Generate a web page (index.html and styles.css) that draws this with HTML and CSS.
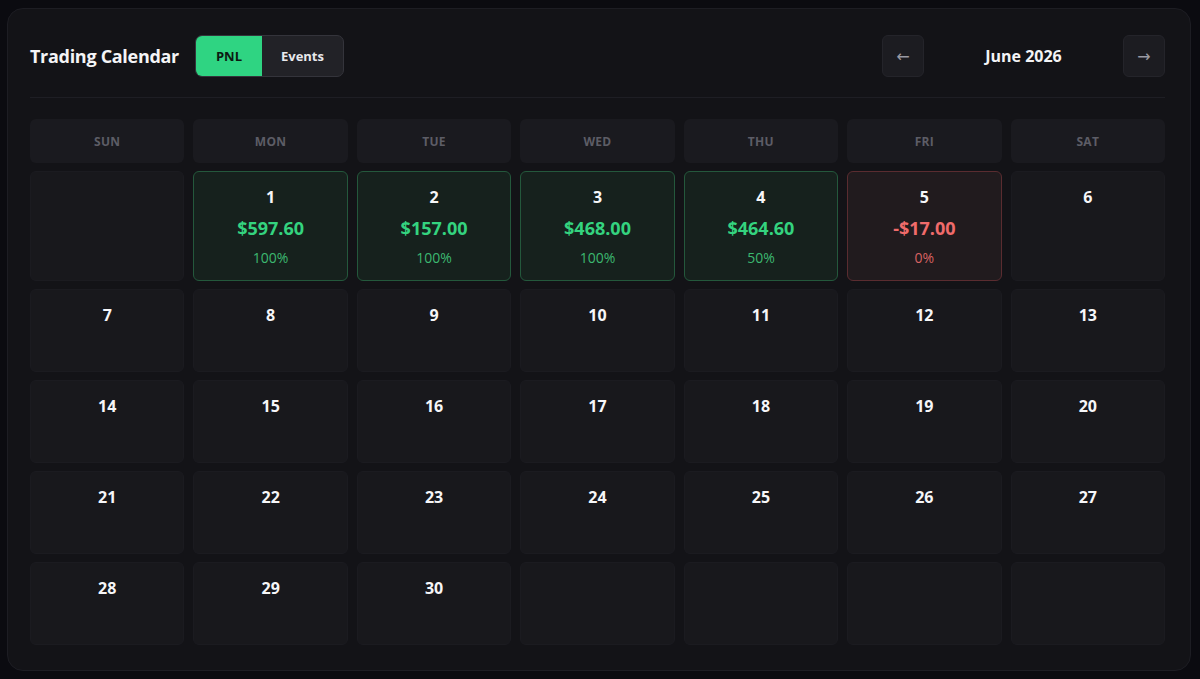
FILE: index.html
```html
<!DOCTYPE html>
<html>
<head>
<meta charset="utf-8">
<link rel="stylesheet" href="styles.css">
</head>
<body>
<div class="card">
  <div class="top">
    <div class="left">
      <h1 class="title">Trading Calendar</h1>
      <div class="toggle">
        <button class="seg active">PNL</button>
        <button class="seg">Events</button>
      </div>
    </div>
    <div class="nav">
      <button class="navbtn">←</button>
      <div class="month">June 2026</div>
      <button class="navbtn">→</button>
    </div>
  </div>
  <div class="grid">
    <div class="wd">SUN</div><div class="wd">MON</div><div class="wd">TUE</div><div class="wd">WED</div><div class="wd">THU</div><div class="wd">FRI</div><div class="wd">SAT</div>

    <div class="day empty"></div>
    <div class="day win"><div class="num">1</div><div class="amt">$597.60</div><div class="pct">100%</div></div>
    <div class="day win"><div class="num">2</div><div class="amt">$157.00</div><div class="pct">100%</div></div>
    <div class="day win"><div class="num">3</div><div class="amt">$468.00</div><div class="pct">100%</div></div>
    <div class="day win"><div class="num">4</div><div class="amt">$464.60</div><div class="pct">50%</div></div>
    <div class="day loss"><div class="num">5</div><div class="amt">-$17.00</div><div class="pct">0%</div></div>
    <div class="day"><div class="num">6</div></div>

    <div class="day"><div class="num">7</div></div>
    <div class="day"><div class="num">8</div></div>
    <div class="day"><div class="num">9</div></div>
    <div class="day"><div class="num">10</div></div>
    <div class="day"><div class="num">11</div></div>
    <div class="day"><div class="num">12</div></div>
    <div class="day"><div class="num">13</div></div>

    <div class="day"><div class="num">14</div></div>
    <div class="day"><div class="num">15</div></div>
    <div class="day"><div class="num">16</div></div>
    <div class="day"><div class="num">17</div></div>
    <div class="day"><div class="num">18</div></div>
    <div class="day"><div class="num">19</div></div>
    <div class="day"><div class="num">20</div></div>

    <div class="day"><div class="num">21</div></div>
    <div class="day"><div class="num">22</div></div>
    <div class="day"><div class="num">23</div></div>
    <div class="day"><div class="num">24</div></div>
    <div class="day"><div class="num">25</div></div>
    <div class="day"><div class="num">26</div></div>
    <div class="day"><div class="num">27</div></div>

    <div class="day"><div class="num">28</div></div>
    <div class="day"><div class="num">29</div></div>
    <div class="day"><div class="num">30</div></div>
    <div class="day empty"></div>
    <div class="day empty"></div>
    <div class="day empty"></div>
    <div class="day empty"></div>
  </div>
</div>
</body>
</html>
```
FILE: styles.css
```css
* { box-sizing: border-box; }
html, body { margin: 0; padding: 0; }
body {
  background: #0b0b10;
  font-family: "Open Sans", "Noto Sans", "Liberation Sans", sans-serif;
  color: #f2f2f4;
  padding: 8px 9px 0 7px;
  height: 679px;
  overflow: hidden;
}
.card {
  background: #131317;
  border: 1px solid #1d1d23;
  border-radius: 16px;
  padding: 26px 25px 24px 22px;
  height: 663px;
}
.top {
  display: flex;
  justify-content: space-between;
  align-items: center;
  padding-bottom: 20px;
  border-bottom: 1px solid #1e1e24;
  margin-bottom: 21px;
}
.left { display: flex; align-items: center; gap: 16px; }
.title {
  margin: 0;
  font-size: 18px;
  font-weight: 700;
  color: #f4f4f6;
  letter-spacing: -0.3px;
}
.toggle {
  display: flex;
  height: 42px;
  border: 1px solid #34343b;
  border-radius: 7px;
  overflow: hidden;
  background: #222227;
}
.seg {
  border: 0;
  font-family: inherit;
  font-size: 13px;
  font-weight: 700;
  color: #e8e8ec;
  background: transparent;
  padding: 0;
}
.seg.active { background: #2fd482; color: #0c1a12; width: 66px; }
.seg:not(.active) { width: 81px; }
.nav { display: flex; align-items: center; }
.navbtn {
  width: 42px; height: 42px;
  border: 1px solid #24242a;
  background: #1c1c21;
  border-radius: 6px;
  color: #9a9aa2;
  font-size: 16px;
  font-family: "DejaVu Sans", sans-serif;
  padding: 0;
}
.month {
  width: 199px;
  text-align: center;
  font-size: 16px;
  font-weight: 700;
  color: #f4f4f6;
}
.grid {
  display: grid;
  grid-template-columns: repeat(7, 1fr);
  grid-template-rows: 44px 110px 83px 83px 83px 83px;
  gap: 8px 9px;
}
.wd {
  background: #1a1a1f;
  border-radius: 6px;
  display: flex;
  align-items: center;
  justify-content: center;
  font-size: 12px;
  font-weight: 700;
  color: #5d5d66;
  letter-spacing: 0.3px;
}
.day {
  background: #18181c;
  border: 1px solid #1b1b20;
  border-radius: 6px;
  display: flex;
  flex-direction: column;
  align-items: center;
  padding-top: 15px;
}
.num {
  font-size: 16px;
  font-weight: 700;
  line-height: 20px;
  color: #f6f6f8;
}
.amt {
  font-size: 18px;
  font-weight: 700;
  line-height: 24px;
  margin-top: 9px;
}
.pct {
  font-size: 14px;
  line-height: 20px;
  margin-top: 8px;
}
.day.win { background: #16211d; border-color: #24583c; }
.day.win .amt { color: #34d37f; }
.day.win .pct { color: #3cb870; }
.day.loss { background: #211b1e; border-color: #5a2c30; }
.day.loss .amt { color: #f06b6b; }
.day.loss .pct { color: #d86262; }
```
